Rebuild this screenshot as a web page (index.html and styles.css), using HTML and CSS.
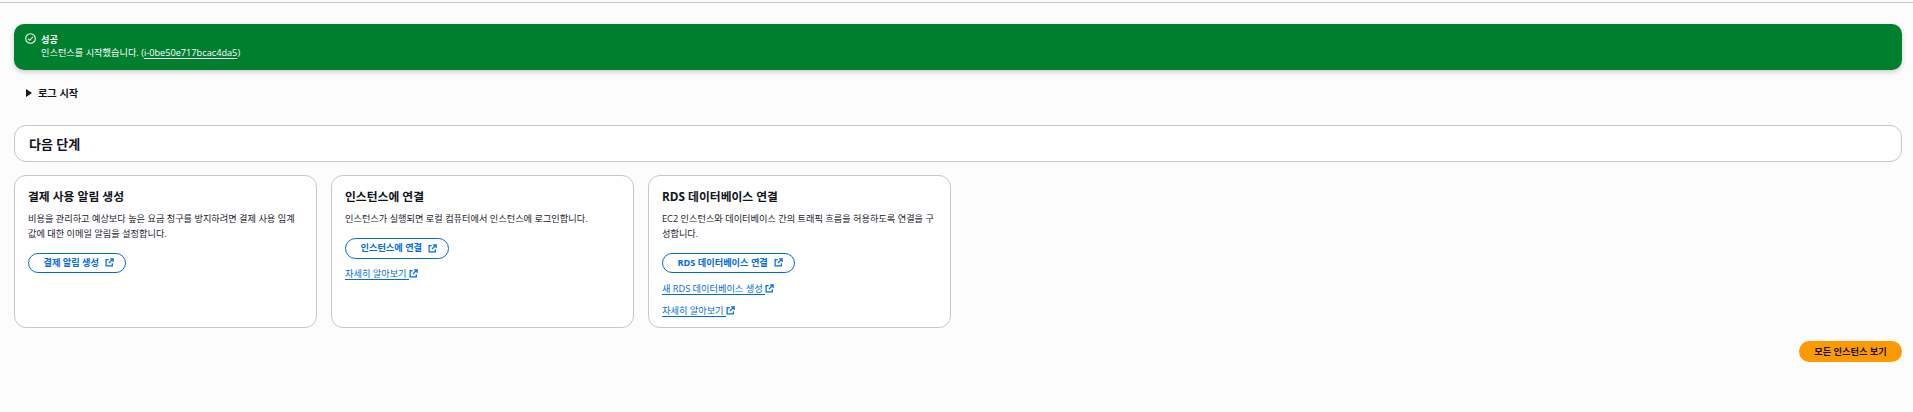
FILE: index.html
```html
<!DOCTYPE html>
<html lang="ko">
<head>
    <meta charset="UTF-8">
    <meta name="viewport" content="width=device-width, initial-scale=1.0">
    <title>인스턴스 시작</title>
    <link rel="stylesheet" href="styles.css">
</head>
<body>
    <svg class="icon-defs" width="0" height="0">
        <symbol id="icon-external" viewBox="0 0 16 16">
            <path d="M6.5 3H2v11h11V9.5M9 1.5h5.5V7M14.5 1.5 7 9" fill="none" stroke="currentColor" stroke-width="2.2"/>
        </symbol>
    </svg>

    <main class="page">
        <div class="flash">
            <svg class="flash-icon" viewBox="0 0 16 16">
                <circle cx="8" cy="8" r="7" fill="none" stroke="currentColor" stroke-width="1.5"/>
                <path d="M4.5 8.2 7 10.7l4.5-5.2" fill="none" stroke="currentColor" stroke-width="1.5"/>
            </svg>
            <div class="flash-text">
                <div class="flash-title">성공</div>
                <div>인스턴스를 시작했습니다. (<a class="flash-link" href="#">i-0be50e717bcac4da5</a>)</div>
            </div>
        </div>

        <div class="log-toggle">
            <span class="caret"></span>
            <span>로그 시작</span>
        </div>

        <div class="next-header">
            <h2>다음 단계</h2>
        </div>

        <div class="cards">
            <section class="card">
                <h3>결제 사용 알림 생성</h3>
                <p>비용을 관리하고 예상보다 높은 요금 청구를 방지하려면 결제 사용 임계값에 대한 이메일 알림을 설정합니다.</p>
                <a class="btn-outline" href="#">결제 알림 생성 <svg class="ext"><use href="#icon-external"/></svg></a>
            </section>

            <section class="card">
                <h3>인스턴스에 연결</h3>
                <p>인스턴스가 실행되면 로컬 컴퓨터에서 인스턴스에 로그인합니다.</p>
                <a class="btn-outline" href="#">인스턴스에 연결 <svg class="ext"><use href="#icon-external"/></svg></a>
                <div class="card-link"><a href="#">자세히 알아보기 </a><svg class="ext"><use href="#icon-external"/></svg></div>
            </section>

            <section class="card">
                <h3>RDS 데이터베이스 연결</h3>
                <p>EC2 인스턴스와 데이터베이스 간의 트래픽 흐름을 허용하도록 연결을 구성합니다.</p>
                <a class="btn-outline" href="#">RDS 데이터베이스 연결 <svg class="ext"><use href="#icon-external"/></svg></a>
                <div class="card-link"><a href="#">새 RDS 데이터베이스 생성 </a><svg class="ext"><use href="#icon-external"/></svg></div>
                <div class="card-link"><a href="#">자세히 알아보기 </a><svg class="ext"><use href="#icon-external"/></svg></div>
            </section>
        </div>

        <div class="actions">
            <a class="btn-primary" href="#">모든 인스턴스 보기</a>
        </div>
    </main>
</body>
</html>
```

FILE: styles.css
```css
* {
    margin: 0;
    padding: 0;
    box-sizing: border-box;
}

body {
    background-color: #fcfcfc;
    color: #0f141a;
    font-family: "Open Sans", "Noto Sans CJK KR", sans-serif;
    font-size: 9.2px;
    line-height: 14px;
    height: 412px;
    overflow: hidden;
}

a {
    color: #006ce0;
    text-underline-offset: 2px;
}

.icon-defs {
    position: absolute;
}

.page {
    border-top: 1px solid #c6c6cd;
    margin-top: 2px;
    padding: 21px 11px 0 14px;
}

.flash {
    display: flex;
    gap: 5px;
    height: 46px;
    padding: 9px 11px;
    background-color: #00802f;
    color: #fff;
    border-radius: 10px;
    box-shadow: 0 2px 5px rgba(0, 7, 22, 0.2);
}

.flash-icon {
    width: 11px;
    height: 11px;
    flex-shrink: 0;
}

.flash-title {
    font-weight: 700;
}

.flash-text {
    line-height: 13px;
}

.flash-link {
    color: #fff;
}

.log-toggle {
    display: flex;
    align-items: center;
    gap: 6px;
    height: 14px;
    margin: 16px 0 0 12px;
    font-size: 10.2px;
    font-weight: 700;
}

.caret {
    width: 0;
    height: 0;
    border-left: 6px solid #0f141a;
    border-top: 4px solid transparent;
    border-bottom: 4px solid transparent;
}

.next-header {
    height: 37px;
    margin-top: 25px;
    padding: 0 14px;
    display: flex;
    align-items: center;
    background-color: #fff;
    border: 1px solid #c6c6cd;
    border-radius: 12px;
}

.next-header h2 {
    font-size: 13px;
    font-weight: 700;
}

.cards {
    display: grid;
    grid-template-columns: 303px 303px 303px;
    column-gap: 14px;
    margin-top: 13px;
}

.card {
    height: 153px;
    padding: 12px 14px 0 13px;
    background-color: #fff;
    border: 1px solid #c6c6cd;
    border-radius: 12px;
}

.card h3 {
    font-size: 11.8px;
    font-weight: 700;
    line-height: 16px;
    margin-bottom: 8px;
}

.card p {
    line-height: 14.5px;
    color: #1b232d;
    margin-bottom: 11.5px;
    word-break: break-all;
}

.btn-outline {
    display: inline-flex;
    align-items: center;
    justify-content: center;
    gap: 6px;
    height: 20.5px;
    padding: 0 11px 0 14.5px;
    border: 1.5px solid #006ce0;
    border-radius: 10.5px;
    font-weight: 700;
    text-decoration: none;
    background-color: #fff;
}

.ext {
    width: 9px;
    height: 9px;
    color: #006ce0;
    vertical-align: -1px;
}

.card-link {
    margin-top: 8.5px;
    height: 14px;
}

.actions {
    display: flex;
    justify-content: flex-end;
    margin-top: 13px;
}

.btn-primary {
    display: flex;
    align-items: center;
    justify-content: center;
    width: 103px;
    height: 21px;
    background-color: #ff9900;
    color: #0f141a;
    border-radius: 11px;
    font-weight: 700;
    text-decoration: none;
}
```
